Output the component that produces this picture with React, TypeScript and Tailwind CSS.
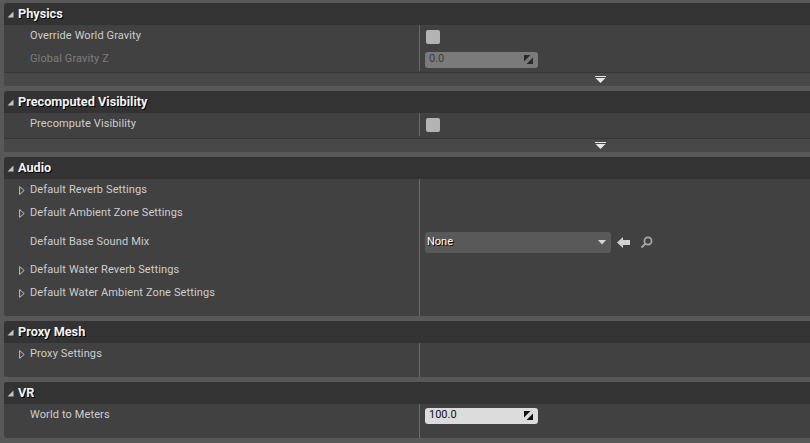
import React from "react";

const font = { fontFamily: "Roboto, 'Noto Sans', sans-serif" };

function HeaderTri() {
  return (
    <svg width="7" height="7" viewBox="0 0 7 7" className="shrink-0">
      <polygon points="6.5,0.5 6.5,6.5 0.5,6.5" fill="#c4c4c4" />
    </svg>
  );
}

function ExpandTri() {
  return (
    <svg width="6" height="9" viewBox="0 0 6 9" className="shrink-0">
      <polygon points="0.6,0.6 5.2,4.5 0.6,8.4" fill="none" stroke="#bdbdbd" strokeWidth="1" />
    </svg>
  );
}

function SpinIcon({ color }: { color: string }) {
  return (
    <svg width="9" height="9" viewBox="0 0 9 9">
      <polygon points="0,0 6.5,0 0,6.5" fill={color} />
      <polygon points="9,2.5 9,9 2.5,9" fill={color} />
    </svg>
  );
}

function Header({ title }: { title: string }) {
  return (
    <div className="h-[22px] bg-[#333333] flex items-center pl-[3px] gap-[4px] rounded-tl-[3px]">
      <HeaderTri />
      <span
        className="text-[12.7px] font-bold text-[#f2f2f2]"
        style={{ textShadow: "1px 1px 0 #000" }}
      >
        {title}
      </span>
    </div>
  );
}

function Row({
  label,
  expandable,
  disabled,
  h = "h-[23px]",
  children,
}: {
  label?: string;
  expandable?: boolean;
  disabled?: boolean;
  h?: string;
  children?: React.ReactNode;
}) {
  return (
    <div className={`grid grid-cols-[415px_1px_1fr] ${h}`}>
      <div className="flex items-center pl-[15px]">
        {label !== undefined && (
          <>
            <div className="w-[11px] flex items-center">{expandable && <ExpandTri />}</div>
            <span
              className={`text-[11px] tracking-[0.12px] ${disabled ? "text-[#7d7d7d]" : "text-[#cdcdcd]"}`}
            >
              {label}
            </span>
          </>
        )}
      </div>
      <div className="bg-[#6a6a6a]" />
      <div className="flex items-center pl-[5px]">{children}</div>
    </div>
  );
}

function Checkbox() {
  return <div className="w-[14px] h-[14px] rounded-[2px] bg-[#b3b3b3] ml-[1px]" />;
}

function NumberBox({ value, disabled }: { value: string; disabled?: boolean }) {
  return (
    <div
      className={`w-[113px] h-[16px] rounded-[3px] flex items-center justify-between pl-[4px] pr-[5px] ${
        disabled ? "bg-[#7a7a7a] text-[#3c3c3c]" : "bg-[#dcdcdc] text-[#111111]"
      }`}
    >
      <span className="text-[11px]">{value}</span>
      <SpinIcon color={disabled ? "#2a2a2a" : "#111111"} />
    </div>
  );
}

function Footer() {
  return (
    <div className="border-t border-[#363636] h-[14px] bg-[#484848] flex items-center pl-[591px]">
      <svg width="11" height="8" viewBox="0 0 11 8">
        <rect x="0" y="0" width="11" height="1" fill="#e6e6e6" />
        <polygon points="0.5,2 10.5,2 5.5,7" fill="#e6e6e6" />
      </svg>
    </div>
  );
}

function Section({ children }: { children: React.ReactNode }) {
  return <div className="rounded-l-[3px] overflow-hidden bg-[#414141] w-[820px]">{children}</div>;
}

export default function App() {
  return (
    <div className="w-[810px] h-[443px] overflow-hidden bg-[#585858]" style={font}>
      <div className="pl-[4px] pt-[3px] flex flex-col gap-[5px]">
        <Section>
          <Header title="Physics" />
          <Row label="Override World Gravity">
            <Checkbox />
          </Row>
          <Row label="Global Gravity Z" disabled>
            <NumberBox value="0.0" disabled />
          </Row>
          <div className="h-[1px]" />
          <Footer />
        </Section>
        <Section>
          <Header title="Precomputed Visibility" />
          <Row label="Precompute Visibility">
            <Checkbox />
          </Row>
          <div className="h-[2px]" />
          <Footer />
        </Section>
        <Section>
          <Header title="Audio" />
          <Row label="Default Reverb Settings" expandable />
          <Row label="Default Ambient Zone Settings" expandable />
          <Row label="Default Base Sound Mix" h="h-[34px]">
            <div className="flex items-center pt-[1px]">
              <div className="w-[186px] h-[21px] rounded-[3px] bg-[#595959] flex items-center justify-between pl-[2px] pr-[5px]">
                <span
                  className="text-[11px] text-white"
                  style={{ textShadow: "1px 1px 0 #000" }}
                >
                  None
                </span>
                <svg width="8" height="5" viewBox="0 0 8 5">
                  <polygon points="0,0 8,0 4,4.5" fill="#d6d6d6" />
                </svg>
              </div>
              <svg width="14" height="11" viewBox="0 0 14 11" className="ml-[6px]">
                <polygon points="0,5.5 6,0 6,3 13,3 13,8 6,8 6,11" fill="#d2d2d2" />
              </svg>
              <svg width="13" height="13" viewBox="0 0 13 13" className="ml-[9px]">
                <circle cx="8" cy="5" r="3.6" fill="none" stroke="#a6a6a6" strokeWidth="1.7" />
                <line x1="5.4" y1="7.6" x2="1.5" y2="11.5" stroke="#a6a6a6" strokeWidth="2" />
              </svg>
            </div>
          </Row>
          <Row label="Default Water Reverb Settings" expandable />
          <Row label="Default Water Ambient Zone Settings" expandable />
          <Row h="h-[11px]" />
        </Section>
        <Section>
          <Header title="Proxy Mesh" />
          <Row label="Proxy Settings" expandable />
          <Row h="h-[11px]" />
        </Section>
        <Section>
          <Header title="VR" />
          <Row label="World to Meters">
            <NumberBox value="100.0" />
          </Row>
          <Row h="h-[11px]" />
        </Section>
      </div>
    </div>
  );
}
